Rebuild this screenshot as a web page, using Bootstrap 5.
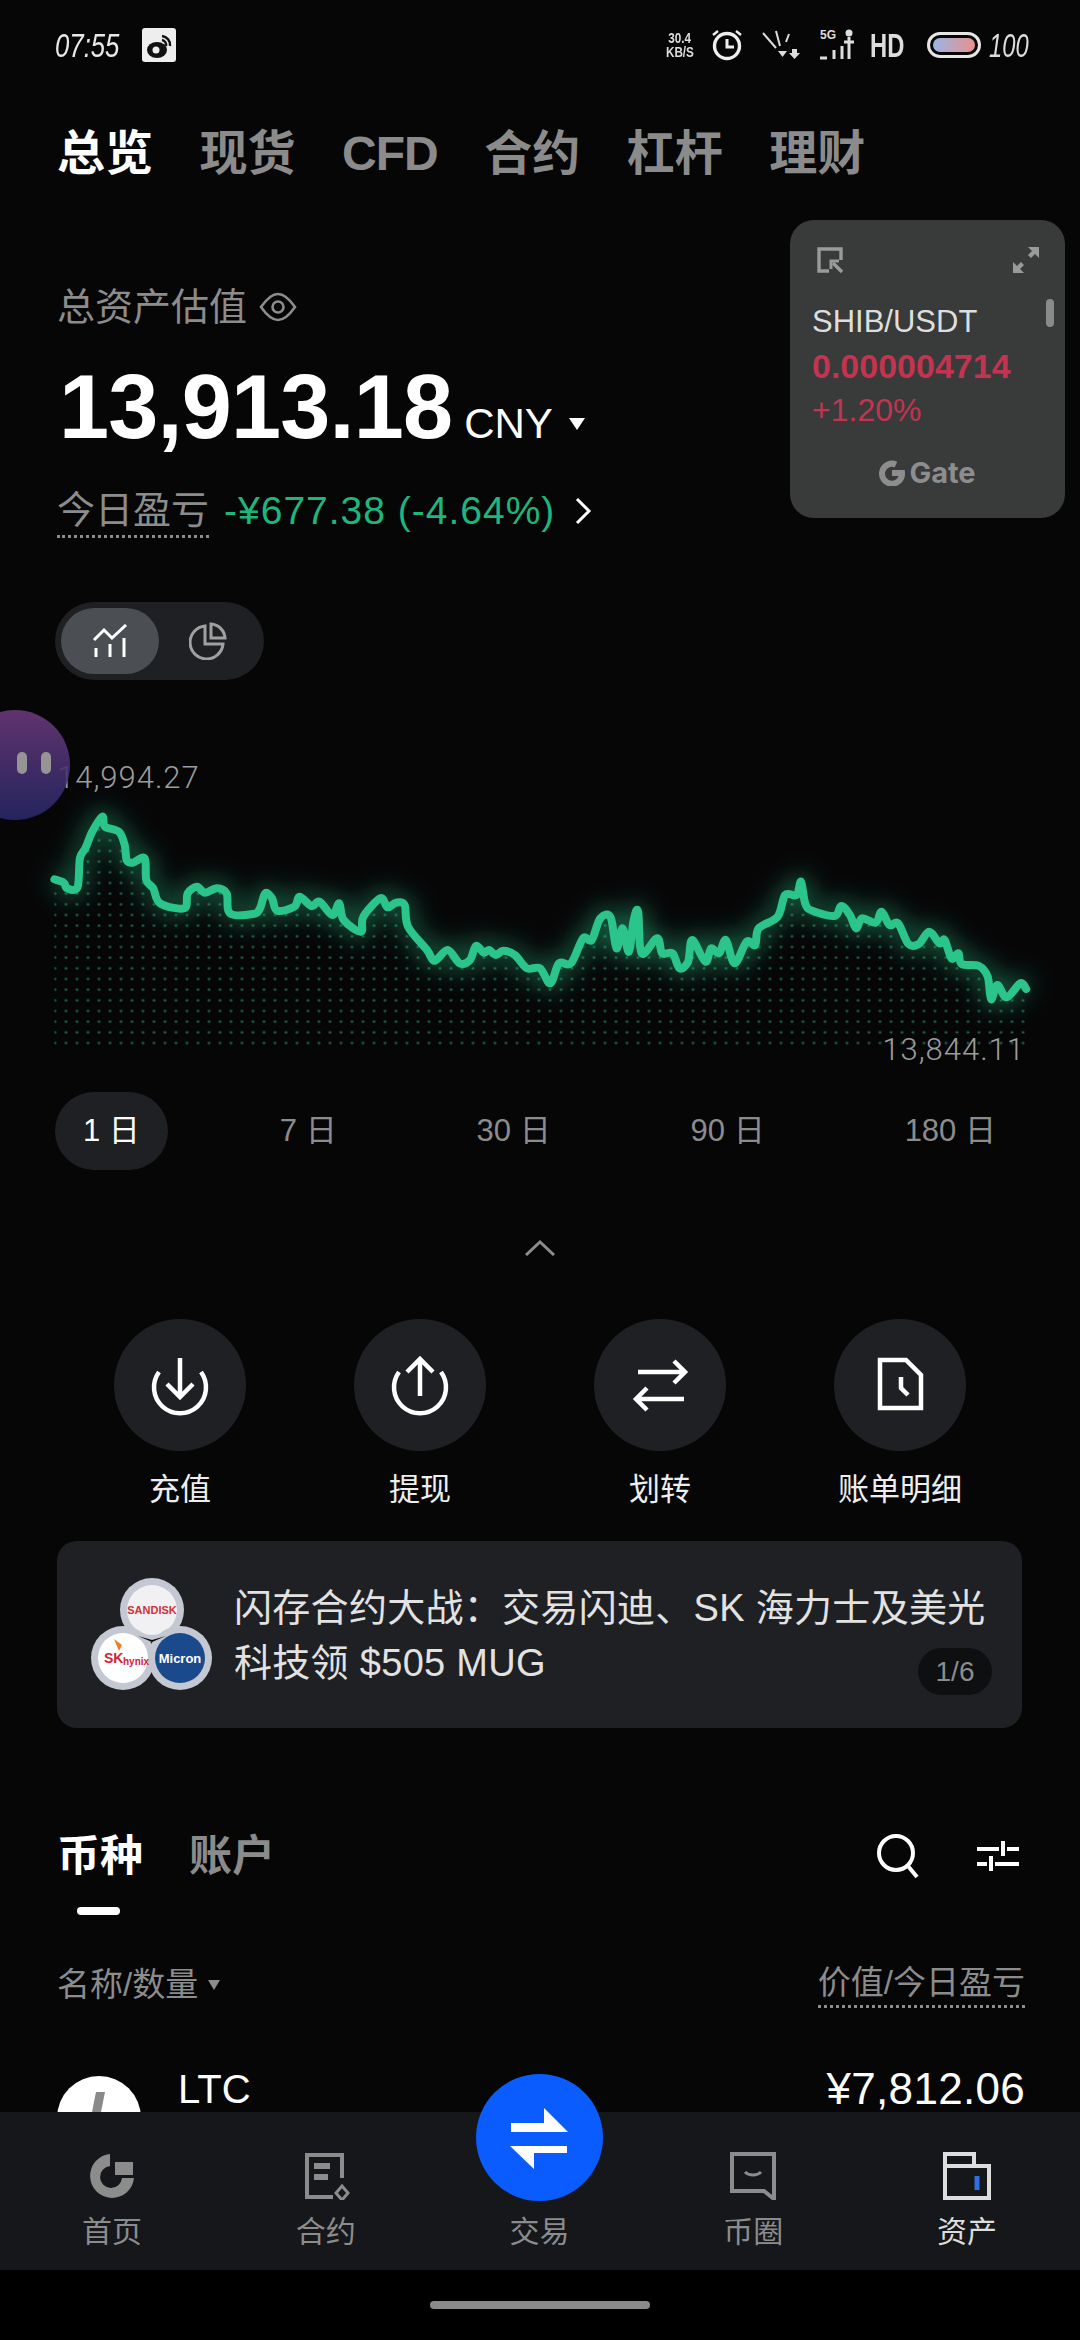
<!DOCTYPE html>
<html lang="zh-CN">
<head>
  <meta charset="UTF-8">
  <meta name="viewport" content="width=device-width, initial-scale=1.0">
  <link href="https://cdn.jsdelivr.net/npm/bootstrap@5.3.1/dist/css/bootstrap.min.css" rel="stylesheet">
  <title>资产总览</title>
  <style>
    html, body { margin: 0; background: #000; }
    body { font-family: "Liberation Sans", "Noto Sans CJK SC", sans-serif; color: #fff; }
    .screen { width: 1080px; height: 2340px; background: #060607; overflow: hidden; }
    .main-area { height: 2112px; }
    .side-pad { padding-left: 57px; padding-right: 55px; }
    .muted { color: #8c8c8c; }

    .status-bar { height: 90px; padding: 0 55px; }
    .status-time { display: block; width: 63px; font: italic 400 33px/1 "Liberation Sans", sans-serif; color: #e8e8e8; transform: scaleX(.78); transform-origin: left center; white-space: nowrap; }
    .net-speed { width: 28px; font: 700 15px/14px "Liberation Sans", sans-serif; color: #ddd; display: flex; flex-direction: column; align-items: center; }
    .net-speed span { display: block; transform: scaleX(.78); white-space: nowrap; }
    .status-hd { display: block; width: 33px; font: 700 33px/1 "Liberation Sans", sans-serif; color: #ddd; transform: scaleX(.72); transform-origin: left center; }
    .status-batt { display: block; width: 36px; font: italic 400 33px/1 "Liberation Sans", sans-serif; color: #ddd; transform: scaleX(.72); transform-origin: left center; }

    .top-tabs { height: 128px; gap: 46.500px; font-size: 48px; font-weight: 700; color: #8b8b8b; }
    .top-tabs .on { color: #fff; }
    .tab-latin { letter-spacing: -1px; }

    .total-label { margin-top: 62px; font-size: 38px; line-height: 54px; color: #8c8c8c; }
    .eye-gap { margin-left: 12px; }
    .total-num { margin-top: 23px; height: 100px; line-height: 100px; }
    .total-num .big { font-size: 90px; font-weight: 700; letter-spacing: -.8px; margin-left: 2px; }
    .total-num .unit { font-size: 42px; margin-left: 12px; }
    .caret-down { width: 0; height: 0; margin-top: 34px; border-left: 8px solid transparent; border-right: 8px solid transparent; border-top: 12px solid #fff; }
    .pnl-row { margin-top: 29px; height: 50px; line-height: 50px; font-size: 38px; }
    .dot-under { border-bottom: 3px dotted #8c8c8c; }
    .pnl-val { color: #1eb67f; margin-left: 15px; font-size: 39px; letter-spacing: 1px; }
    .pnl-go { margin-left: 18px; }

    .view-toggle { margin-top: 66px; margin-left: 55px; width: 209px; height: 78px; padding: 6px; background: #1e2023; border-radius: 39px; }
    .view-on { width: 98px; height: 66px; background: #4b4e53; border-radius: 33px; }
    .view-off { width: 98px; height: 66px; }

    .chart-box { position: relative; height: 412px; }
    .chart-box svg { display: block; }
    .chart-lbl { position: absolute; font: 300 31px/40px Roboto, sans-serif; color: #9c9c9c; letter-spacing: 1px; }

    .period-row { padding: 0 56px 0 55px; }
    .period-btn { height: 78px; line-height: 78px; padding: 0 28px; font-size: 31px; color: #8c8c8c; border-radius: 39px; }
    .period-btn.on { background: #1e2023; color: #fff; }

    .fold-arrow { margin-top: 70px; height: 15px; }
    .action-row { margin-top: 64px; padding: 0 60px; }
    .action-circle { width: 132px; height: 132px; background: #1e2023; border-radius: 50%; }
    .action-lbl { margin-top: 17px; font-size: 31px; line-height: 44px; color: #eee; }

    .promo { margin: 29px 58px 0 57px; height: 187px; background: #1e2024; border-radius: 20px; position: relative; }
    .promo-txt { font-size: 38px; line-height: 55px; color: #e2e2e2; padding-top: 40px; letter-spacing: .3px; white-space: nowrap; }
    .promo-pager { position: absolute; right: 30px; bottom: 33px; width: 74px; height: 47px; line-height: 47px; background: #0e0f10; color: #8c8c8c; border-radius: 24px; font-size: 28px; text-align: center; }

    .coin-head { margin-top: 98px; height: 60px; }
    .coin-tabs { gap: 46px; font-size: 43px; line-height: 60px; font-weight: 700; color: #8b8b8b; }
    .coin-tabs .on { color: #fff; }
    .coin-ind { margin: 21px 0 0 20px; width: 43px; height: 8px; background: #fff; border-radius: 4px; }
    .list-head { margin-top: 46px; font-size: 33px; line-height: 44px; color: #8c8c8c; }
    .caret-sm { width: 0; height: 0; border-left: 6px solid transparent; border-right: 6px solid transparent; border-top: 10px solid #8c8c8c; margin-left: 10px; }
    .search-gap { margin-right: 55px; }
    .filter-ico { margin-right: 6px; }
    .coin-row { margin-top: 68px; }
    .coin-logo { width: 84px; height: 84px; border-radius: 50%; background: #fff; }
    .coin-name { font-size: 40px; line-height: 44px; margin: -9px 0 0 37px; }
    .coin-val { font-size: 44px; line-height: 44px; margin-top: -9px; letter-spacing: .3px; }

    .tab-bar { position: relative; height: 158px; background: #15171a; padding: 40px 6px 0 5px; }
    .tab-item { width: 20%; font-size: 30px; line-height: 40px; color: #8c8c8c; }
    .tab-item.on { color: #ddd; }
    .tab-item svg { display: block; margin: 0 auto 12px; }
    .home-zone { height: 70px; background: #000; padding-top: 31px; }
    .home-bar { width: 220px; height: 8px; background: #8a8a8a; border-radius: 4px; }

    /* floating things over the page */
    .float-card { position: absolute; left: 790px; top: 220px; width: 275px; height: 298px; background: #393a3a; border-radius: 24px; padding: 27px 22px; }
    .float-tools { padding: 0 4px 0 5px; }
    .float-pair { font-size: 31px; line-height: 42px; color: #dedede; margin-top: 28px; }
    .float-price { font-size: 34px; line-height: 46px; font-weight: 700; color: #c2344f; }
    .float-pct { font-size: 32px; line-height: 42px; color: #c2344f; }
    .float-brand { margin-top: 24px; font: 700 29px/36px Inter, sans-serif; color: #8d8d8d; }
    .float-scroll { position: absolute; left: 256px; top: 79px; width: 8px; height: 28px; background: #8a8a8a; border-radius: 4px; }
    .float-orb { position: absolute; left: -40px; top: 710px; width: 110px; height: 110px; border-radius: 50%; background: linear-gradient(#6d3a7c, #29296a); opacity: .88; }
    .orb-bars { position: absolute; left: 57px; top: 42px; gap: 14px; }
    .orb-bars i { display: block; width: 10px; height: 22px; background: #a9a9a9; border-radius: 5px; }
    .trade-btn { position: absolute; left: 476px; top: 2074px; width: 127px; height: 127px; border-radius: 50%; background: #0a5cff; }
  </style>
</head>
<body>
  <div class="screen position-relative">
    <div class="main-area">
      <!-- 状态栏 -->
      <div class="status-bar d-flex align-items-center justify-content-between">
        <div class="d-flex align-items-center gap-4">
          <span class="status-time">07:55</span>
          <svg width="34" height="34" viewBox="0 0 34 34">
            <rect width="34" height="34" rx="3" fill="#eee"/>
            <ellipse cx="15" cy="22" rx="10" ry="8" fill="#111"/>
            <circle cx="14" cy="22" r="3.5" fill="#eee"/>
            <path d="M20 8a9 9 0 0 1 8 10M20 12a5 5 0 0 1 4 6" fill="none" stroke="#111" stroke-width="2.5"/>
          </svg>
        </div>
        <div class="d-flex align-items-center">
          <div class="net-speed"><span>30.4</span><span>KB/S</span></div>
          <svg class="ms-3" width="34" height="34" viewBox="0 0 34 34" fill="none" stroke="#eee" stroke-width="3.4">
            <circle cx="17" cy="18" r="12.5"/>
            <path d="M17 11v8h7" stroke-width="3"/>
            <path d="M3 7l5-4M31 7l-5-4" stroke-width="2.4"/>
          </svg>
          <svg class="ms-3" width="44" height="30" viewBox="0 0 44 30" fill="none" stroke="#ddd" stroke-width="2">
            <path d="M3 3l13 15M16 1l4 15M29 4l-3 8" />
            <path d="M18 21h9l-4.500 6z" fill="#ddd" stroke="none"/>
            <path d="M32 19h5v4h3l-5.500 6-5.500-6h3z" fill="#ddd" stroke="none"/>
          </svg>
          <svg class="ms-3" width="34" height="32" viewBox="0 0 34 32">
            <text x="0" y="10" font-family="Liberation Sans, sans-serif" font-size="12" font-weight="700" fill="#ddd">5G</text>
            <path d="M0 29h7M14 21v9M22 17v13M29 8v22M24 13h10" stroke="#ddd" stroke-width="3" fill="none"/>
            <circle cx="29" cy="4" r="3.500" fill="#ddd"/>
          </svg>
          <span class="status-hd ms-3">HD</span>
          <svg class="ms-4" width="54" height="26" viewBox="0 0 54 26">
            <defs><linearGradient id="battGrad"><stop offset="0" stop-color="#9ab6e6"/><stop offset="1" stop-color="#ea8f8c"/></linearGradient></defs>
            <rect x="1.500" y="1.500" width="51" height="23" rx="11.500" fill="none" stroke="#e6e6e6" stroke-width="3"/>
            <rect x="6" y="6" width="42" height="14" rx="7" fill="url(#battGrad)"/>
          </svg>
          <span class="status-batt ms-2">100</span>
        </div>
      </div>

      <!-- 顶部标签 -->
      <div class="top-tabs side-pad d-flex align-items-center">
        <span class="on">总览</span><span>现货</span><span class="tab-latin">CFD</span><span>合约</span><span>杠杆</span><span>理财</span>
      </div>

      <!-- 总资产 -->
      <div class="total-label side-pad d-flex align-items-center">
        总资产估值
        <svg class="eye-gap" width="38" height="30" viewBox="0 0 38 30" fill="none" stroke="#8c8c8c" stroke-width="2.600">
          <path d="M2 15C9 5 14 2 19 2s10 3 17 13c-7 10-12 13-17 13S9 25 2 15z"/>
          <circle cx="19" cy="15" r="5.500"/>
        </svg>
      </div>
      <div class="total-num side-pad d-flex align-items-baseline">
        <span class="big">13,913.18</span><span class="unit">CNY</span>
        <span class="caret-down ms-3 align-self-center"></span>
      </div>
      <div class="pnl-row side-pad d-flex align-items-center">
        <span class="dot-under muted">今日盈亏</span>
        <span class="pnl-val">-¥677.38 (-4.64%)</span>
        <svg class="pnl-go" width="20" height="30" viewBox="0 0 20 30" fill="none" stroke="#fff" stroke-width="3"><path d="M4 3l12 12L4 27"/></svg>
      </div>

      <!-- 图表切换 -->
      <div class="view-toggle d-flex">
        <div class="view-on d-flex align-items-center justify-content-center">
          <svg width="36" height="34" viewBox="0 0 36 34" fill="none" stroke="#fff" stroke-width="3">
            <path d="M2 16l10-10 8 8L34 1"/>
            <path d="M4 24v9M18 20v13M32 14v19"/>
          </svg>
        </div>
        <div class="view-off d-flex align-items-center justify-content-center">
          <svg width="38" height="38" viewBox="0 0 38 38" fill="none" stroke="#a0a0a0" stroke-width="3">
            <path d="M16 4a16.500 16.500 0 1 0 18 18H16z"/>
            <path d="M22 2v14h14A15 15 0 0 0 22 2z"/>
          </svg>
        </div>
      </div>

      <!-- 走势图 -->
      <div class="chart-box">
        <svg width="1080" height="412" viewBox="0 0 1080 412" id="assetChart">
          <defs>
            <pattern id="dotGrid" x="49.500" y="5.555" width="11" height="10.670" patternUnits="userSpaceOnUse">
              <circle cx="5.500" cy="5.335" r="1.300" fill="#1b6e50"/>
            </pattern>
            <filter id="lineGlow" x="-5%" y="-40%" width="110%" height="180%"><feGaussianBlur stdDeviation="12"/></filter>
            <clipPath id="underLine"><path id="underPath"/></clipPath>
          </defs>
          <rect x="50" y="100" width="980" height="270" fill="url(#dotGrid)" clip-path="url(#underLine)"/>
          <path id="glowLine" fill="none" stroke="#2bc48a" stroke-width="14" stroke-opacity=".5" filter="url(#lineGlow)"/>
          <path id="mainLine" fill="none" stroke="#2bc48a" stroke-width="8" stroke-linejoin="round" stroke-linecap="round"/>
        </svg>
        <div class="chart-lbl" style="left:57px;top:78px">14,994.27</div>
        <div class="chart-lbl" style="right:55px;top:350px">13,844.11</div>
      </div>

      <div class="period-row d-flex justify-content-between">
        <div class="period-btn on">1 日</div>
        <div class="period-btn">7 日</div>
        <div class="period-btn">30 日</div>
        <div class="period-btn">90 日</div>
        <div class="period-btn">180 日</div>
      </div>

      <div class="fold-arrow d-flex justify-content-center">
        <svg width="32" height="16" viewBox="0 0 32 16" fill="none" stroke="#8c8c8c" stroke-width="3"><path d="M2 15L16 2l14 13"/></svg>
      </div>

      <!-- 快捷操作 -->
      <div class="action-row row g-0 text-center">
        <div class="col-3 d-flex flex-column align-items-center">
          <div class="action-circle d-flex align-items-center justify-content-center">
            <svg width="64" height="64" viewBox="0 0 64 64" fill="none" stroke="#fff" stroke-width="4.500">
              <path d="M11 19A26 26 0 1 0 53 19"/><path d="M32 5v39M19 31l13 13 13-13"/>
            </svg>
          </div>
          <div class="action-lbl">充值</div>
        </div>
        <div class="col-3 d-flex flex-column align-items-center">
          <div class="action-circle d-flex align-items-center justify-content-center">
            <svg width="64" height="64" viewBox="0 0 64 64" fill="none" stroke="#fff" stroke-width="4.500">
              <path d="M11 19A26 26 0 1 0 53 19"/><path d="M32 43V6M19 19L32 6l13 13"/>
            </svg>
          </div>
          <div class="action-lbl">提现</div>
        </div>
        <div class="col-3 d-flex flex-column align-items-center">
          <div class="action-circle d-flex align-items-center justify-content-center">
            <svg width="64" height="64" viewBox="0 0 64 64" fill="none" stroke="#fff" stroke-width="4.500">
              <path d="M10 19h46M46 8l11 11-11 11"/><path d="M56 46H9M19 35L8 46l11 11"/>
            </svg>
          </div>
          <div class="action-lbl">划转</div>
        </div>
        <div class="col-3 d-flex flex-column align-items-center">
          <div class="action-circle d-flex align-items-center justify-content-center">
            <svg width="64" height="64" viewBox="0 0 64 64" fill="none" stroke="#fff" stroke-width="4.500">
              <path d="M12 7h26l15 15v33H12z"/><path d="M33 24v11l7 7"/>
            </svg>
          </div>
          <div class="action-lbl">账单明细</div>
        </div>
      </div>

      <!-- 活动横幅 -->
      <div class="promo d-flex">
        <svg width="177" height="187" viewBox="0 0 177 187" class="flex-shrink-0">
          <circle cx="95" cy="69" r="32" fill="#c4c8d2"/><circle cx="95" cy="69" r="25" fill="#f1f1f3"/>
          <circle cx="66" cy="117" r="32" fill="#c4c8d2"/><circle cx="66" cy="117" r="25" fill="#fff"/>
          <circle cx="123" cy="117" r="32" fill="#c4c8d2"/><circle cx="123" cy="117" r="25" fill="#1b4a8c"/>
          <path d="M95 101l-14-6 14 4 14-4z" fill="#0a0a0a"/>
          <text x="95" y="73" text-anchor="middle" font-size="11" font-weight="700" fill="#d0303a">SANDISK</text>
          <text x="47" y="122" font-size="14" font-weight="700" fill="#d8203a">SK</text>
          <text x="66" y="124" font-size="10" font-weight="700" fill="#d8203a">hynix</text>
          <path d="M57 98l8 6-3 6z" fill="#ef7d22"/>
          <text x="123" y="122" text-anchor="middle" font-size="13" font-weight="700" fill="#fff">Micron</text>
        </svg>
        <div class="promo-txt">闪存合约大战：交易闪迪、SK 海力士及美光<br>科技领 $505 MUG</div>
        <div class="promo-pager">1/6</div>
      </div>

      <!-- 币种列表 -->
      <div class="coin-head side-pad d-flex justify-content-between">
        <div class="coin-tabs d-flex">
          <span class="on">币种</span><span>账户</span>
        </div>
        <div class="d-flex align-items-center">
          <svg class="search-gap" width="46" height="46" viewBox="0 0 46 46" fill="none" stroke="#fff" stroke-width="4">
            <circle cx="20" cy="20" r="17"/><path d="M32 33l9 11"/>
          </svg>
          <svg class="filter-ico" width="42" height="32" viewBox="0 0 42 32" fill="none" stroke="#fff" stroke-width="4">
            <path d="M0 9h22M30 9h12M26 1v15M0 24h10M18 24h24M14 16v15"/>
          </svg>
        </div>
      </div>
      <div class="side-pad"><div class="coin-ind"></div></div>
      <div class="list-head side-pad d-flex justify-content-between">
        <div class="d-flex align-items-center">名称/数量<span class="caret-sm"></span></div>
        <div><span class="dot-under d-block">价值/今日盈亏</span></div>
      </div>
      <div class="coin-row side-pad d-flex justify-content-between">
        <div class="d-flex">
          <div class="coin-logo d-flex justify-content-center pt-3 flex-shrink-0">
            <svg width="24" height="60" viewBox="0 0 24 60"><path d="M9 0h9l-6 30H3z" fill="#8a8a8a"/></svg>
          </div>
          <div class="coin-name">LTC</div>
        </div>
        <div class="coin-val">¥7,812.06</div>
      </div>
    </div>

    <!-- 底部导航 -->
    <div class="tab-bar d-flex text-center">
      <div class="tab-item">
        <svg width="48" height="48" viewBox="0 0 48 48" fill="#8c8c8c">
          <path d="M22 2a22 22 0 1 0 24 24H34a11 11 0 1 1-12-12z"/><path d="M27 10h18v13H27z"/>
        </svg>首页
      </div>
      <div class="tab-item">
        <svg width="48" height="48" viewBox="0 0 48 48" fill="none" stroke="#8c8c8c" stroke-width="4">
          <path d="M40 26V3H5v42h26"/><path d="M12 14h16M12 25h14" stroke-width="6"/><path d="M40 34l6 7-6 7-6-7z" stroke-width="3"/>
        </svg>合约
      </div>
      <div class="tab-item">
        <svg width="48" height="48" viewBox="0 0 48 48"></svg>交易
      </div>
      <div class="tab-item">
        <svg width="48" height="48" viewBox="0 0 48 48" fill="none" stroke="#8c8c8c" stroke-width="4">
          <path d="M3 2h42v45l-10-8H3z"/><path d="M16 20c4 4 12 4 16 0" stroke-width="3"/>
        </svg>币圈
      </div>
      <div class="tab-item on">
        <svg width="48" height="48" viewBox="0 0 48 48" fill="none" stroke="#ddd" stroke-width="4">
          <path d="M2 2h29v12h15v32H2z"/><path d="M2 14h29"/><path d="M34 24v14" stroke="#2f6fe0" stroke-width="5"/>
        </svg>资产
      </div>
    </div>
    <div class="home-zone d-flex justify-content-center"><div class="home-bar"></div></div>

    <!-- 悬浮窗 -->
    <div class="float-card">
      <div class="float-tools d-flex justify-content-between">
        <svg width="26" height="26" viewBox="0 0 26 26" fill="none" stroke="#9a9a9a" stroke-width="3.400">
          <path d="M12 24H2V2h22v11"/><path d="M25 25l-9-9" /><path d="M14 22v-8h8" stroke-width="3"/>
        </svg>
        <svg width="26" height="26" viewBox="0 0 26 26" fill="#9a9a9a">
          <path d="M15 0h11v11l-4-4-4 4-3-3 4-4zM0 15v11h11l-4-4 4-4-3-3-4 4z"/>
        </svg>
      </div>
      <div class="float-pair">SHIB/USDT</div>
      <div class="float-price">0.000004714</div>
      <div class="float-pct">+1.20%</div>
      <div class="float-brand d-flex align-items-center justify-content-center">
        <svg class="me-1" width="26" height="26" viewBox="0 0 26 26" fill="none" stroke="#8d8d8d" stroke-width="6"><path d="M17 4.500A10 10 0 1 0 23 13H13"/></svg>Gate
      </div>
      <div class="float-scroll"></div>
    </div>
    <div class="float-orb"><div class="orb-bars d-flex"><i></i><i></i></div></div>
    <div class="trade-btn">
      <svg width="127" height="127" viewBox="0 0 127 127" fill="#fff">
        <path d="M68 34l24 24H35v-9h33zM34 72h57v7H58v16z"/>
      </svg>
    </div>
  </div>

  <script>
    // 走势图数据，从两段坐标拼起来
    const chartTop = 680;
    const leftPart = [[158,298],[185,308],[195,325],[225,322],[232,235],[248,205],[268,155],[297,110],[305,140],[345,155],[362,195],[368,240],[385,248],[420,235],[425,300],[445,325],[465,370],[535,385],[545,340],[572,320],[595,338],[630,325],[658,340],[668,400],[735,402],[755,385],[770,340],[790,355],[805,392],[855,380],[870,350],[905,378],[928,365],[965,405],[985,370],[998,420],[1048,455],[1055,410],[1105,355],[1125,382],[1150,368],[1175,375],[1185,440],[1240,510],[1262,542],[1300,510],[1335,550],[1365,540],[1382,498],[1405,518],[1420,510],[1440,525],[1462,512],[1495,525],[1530,565]];
    const rightPart = [[0,385],[30,430],[55,370],[90,370],[125,295],[150,300],[175,235],[205,232],[222,325],[240,265],[258,335],[272,240],[285,215],[295,340],[340,295],[355,340],[385,340],[405,385],[430,365],[442,300],[480,365],[497,325],[520,340],[540,300],[565,370],[600,305],[625,315],[635,265],[690,230],[712,165],[745,165],[758,125],[770,190],[790,212],[855,228],[875,198],[900,225],[918,265],[935,235],[975,248],[992,215],[1015,255],[1040,250],[1070,312],[1100,312],[1130,275],[1160,310],[1175,300],[1195,355],[1215,340],[1225,372],[1275,378],[1300,410],[1310,478],[1328,435],[1355,472],[1395,430],[1412,447]];

    const pts = [];
    leftPart.forEach(p => pts.push([p[0] / 2.904, 780 + p[1] / 3 - chartTop]));
    rightPart.forEach(p => pts.push([540 + p[0] / 2.904, 840 + p[1] / 3 - chartTop]));

    let d = 'M' + pts[0][0].toFixed(1) + ' ' + pts[0][1].toFixed(1);
    for (let i = 0; i < pts.length - 1; i++) {
      const p0 = pts[i - 1] || pts[i], p1 = pts[i], p2 = pts[i + 1], p3 = pts[i + 2] || p2;
      const c1 = [p1[0] + (p2[0] - p0[0]) / 6, p1[1] + (p2[1] - p0[1]) / 6];
      const c2 = [p2[0] - (p3[0] - p1[0]) / 6, p2[1] - (p3[1] - p1[1]) / 6];
      d += 'C' + [c1, c2, p2].map(c => c[0].toFixed(1) + ' ' + c[1].toFixed(1)).join(' ');
    }
    document.getElementById('mainLine').setAttribute('d', d);
    document.getElementById('glowLine').setAttribute('d', d);
    document.getElementById('underPath').setAttribute('d', d + 'V375H' + pts[0][0].toFixed(1) + 'Z');
  </script>
  <script src="https://cdn.jsdelivr.net/npm/bootstrap@5.3.1/dist/js/bootstrap.bundle.min.js"></script>
</body>
</html>
